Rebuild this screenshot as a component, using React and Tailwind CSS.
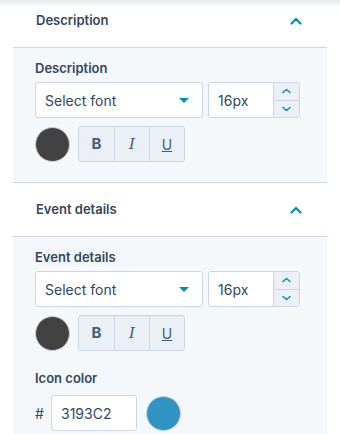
import React from "react";

const font = { fontFamily: "Inter, Lato, sans-serif" };

function Chevron({ className = "" }) {
  return (
    <svg width="12" height="8" viewBox="0 0 12 8" className={className}>
      <polyline points="1.5,6.5 6,2 10.5,6.5" fill="none" stroke="#0091ae" strokeWidth="2.2" strokeLinecap="round" strokeLinejoin="round" />
    </svg>
  );
}

function SmallChev({ down }) {
  return (
    <svg width="9" height="6" viewBox="0 0 9 6">
      <polyline points={down ? "1,1.5 4.5,4.5 8,1.5" : "1,4.5 4.5,1.5 8,4.5"} fill="none" stroke="#0091ae" strokeWidth="1.5" strokeLinecap="round" strokeLinejoin="round" />
    </svg>
  );
}

function Header({ title, first }) {
  return (
    <div className={`flex items-center justify-between pl-[23px] pr-[25px] ${first ? "h-[53px] -mt-[6px]" : "h-[53px]"}`}>
      <span className="text-[13px] font-semibold text-[#33475b]">{title}</span>
      <Chevron />
    </div>
  );
}

function FontRow() {
  return (
    <div className="flex gap-[5px]">
      <div className="flex items-center justify-between w-[168px] h-[36px] bg-white border border-[#cbd6e2] rounded-[3px] pl-[9px] pr-[13px]">
        <span className="text-[14px] text-[#33475b]">Select font</span>
        <svg width="10" height="5" viewBox="0 0 10 5"><polygon points="0,0 10,0 5,5" fill="#0091ae" /></svg>
      </div>
      <div className="flex w-[92px] h-[36px] bg-white border border-[#cbd6e2] rounded-[3px] overflow-hidden">
        <div className="flex-1 flex items-center pl-[9px] text-[14px] text-[#33475b]">16px</div>
        <div className="w-[26px] flex flex-col bg-[#eaf0f6] border-l border-[#cbd6e2]">
          <div className="flex-1 flex items-center justify-center border-b border-[#cbd6e2]"><SmallChev /></div>
          <div className="flex-1 flex items-center justify-center"><SmallChev down /></div>
        </div>
      </div>
    </div>
  );
}

function StyleRow() {
  return (
    <div className="flex items-center gap-[8px] mt-[8px]">
      <div className="w-[35px] h-[35px] rounded-full bg-[#424242] border border-[#cbd6e2]" />
      <div className="flex h-[36px] border border-[#cbd6e2] rounded-[3px] bg-[#eaf0f6] overflow-hidden">
        <div className="w-[35px] flex items-center justify-center text-[15px] font-bold text-[#425b76]">B</div>
        <div className="w-[35px] flex items-center justify-center border-l border-[#cbd6e2] text-[15px] italic text-[#425b76]" style={{ fontFamily: "'DejaVu Serif', serif" }}>I</div>
        <div className="w-[35px] flex items-center justify-center border-l border-[#cbd6e2] text-[14px] underline text-[#425b76]">U</div>
      </div>
    </div>
  );
}

export default function App() {
  return (
    <div className="relative w-[340px] h-[434px] overflow-hidden bg-white" style={font}>
      <div className="mx-[13px]">
        <Header title="Description" first />
        <div className="bg-[#f5f8fa] border-t border-b border-[#cbd6e2] pl-[22px] pt-[10px] pb-[20px]">
          <div className="text-[13px] font-semibold text-[#33475b] h-[24px] leading-[20px]">Description</div>
          <FontRow />
          <StyleRow />
        </div>
        <Header title="Event details" />
        <div className="bg-[#f5f8fa] border-t border-[#cbd6e2] pl-[22px] pt-[10px] pb-[20px]">
          <div className="text-[13px] font-semibold text-[#33475b] h-[24px] leading-[20px]">Event details</div>
          <FontRow />
          <StyleRow />
          <div className="text-[13px] font-semibold text-[#33475b] mt-[17px] h-[27px] leading-[20px]">Icon color</div>
          <div className="flex items-center">
            <span className="text-[14px] text-[#33475b] w-[16px]">#</span>
            <div className="flex items-center w-[86px] h-[36px] bg-white border border-[#cbd6e2] rounded-[3px] pl-[9px] text-[14px] text-[#33475b]">3193C2</div>
            <div className="ml-[9px] w-[35px] h-[35px] rounded-full bg-[#3193c2] border border-[#cbd6e2]" />
          </div>
          <div className="h-[20px]" />
        </div>
      </div>
      <div className="absolute top-0 left-0 right-0 h-[8px] bg-gradient-to-b from-[#e6eaee] to-transparent" />
    </div>
  );
}
